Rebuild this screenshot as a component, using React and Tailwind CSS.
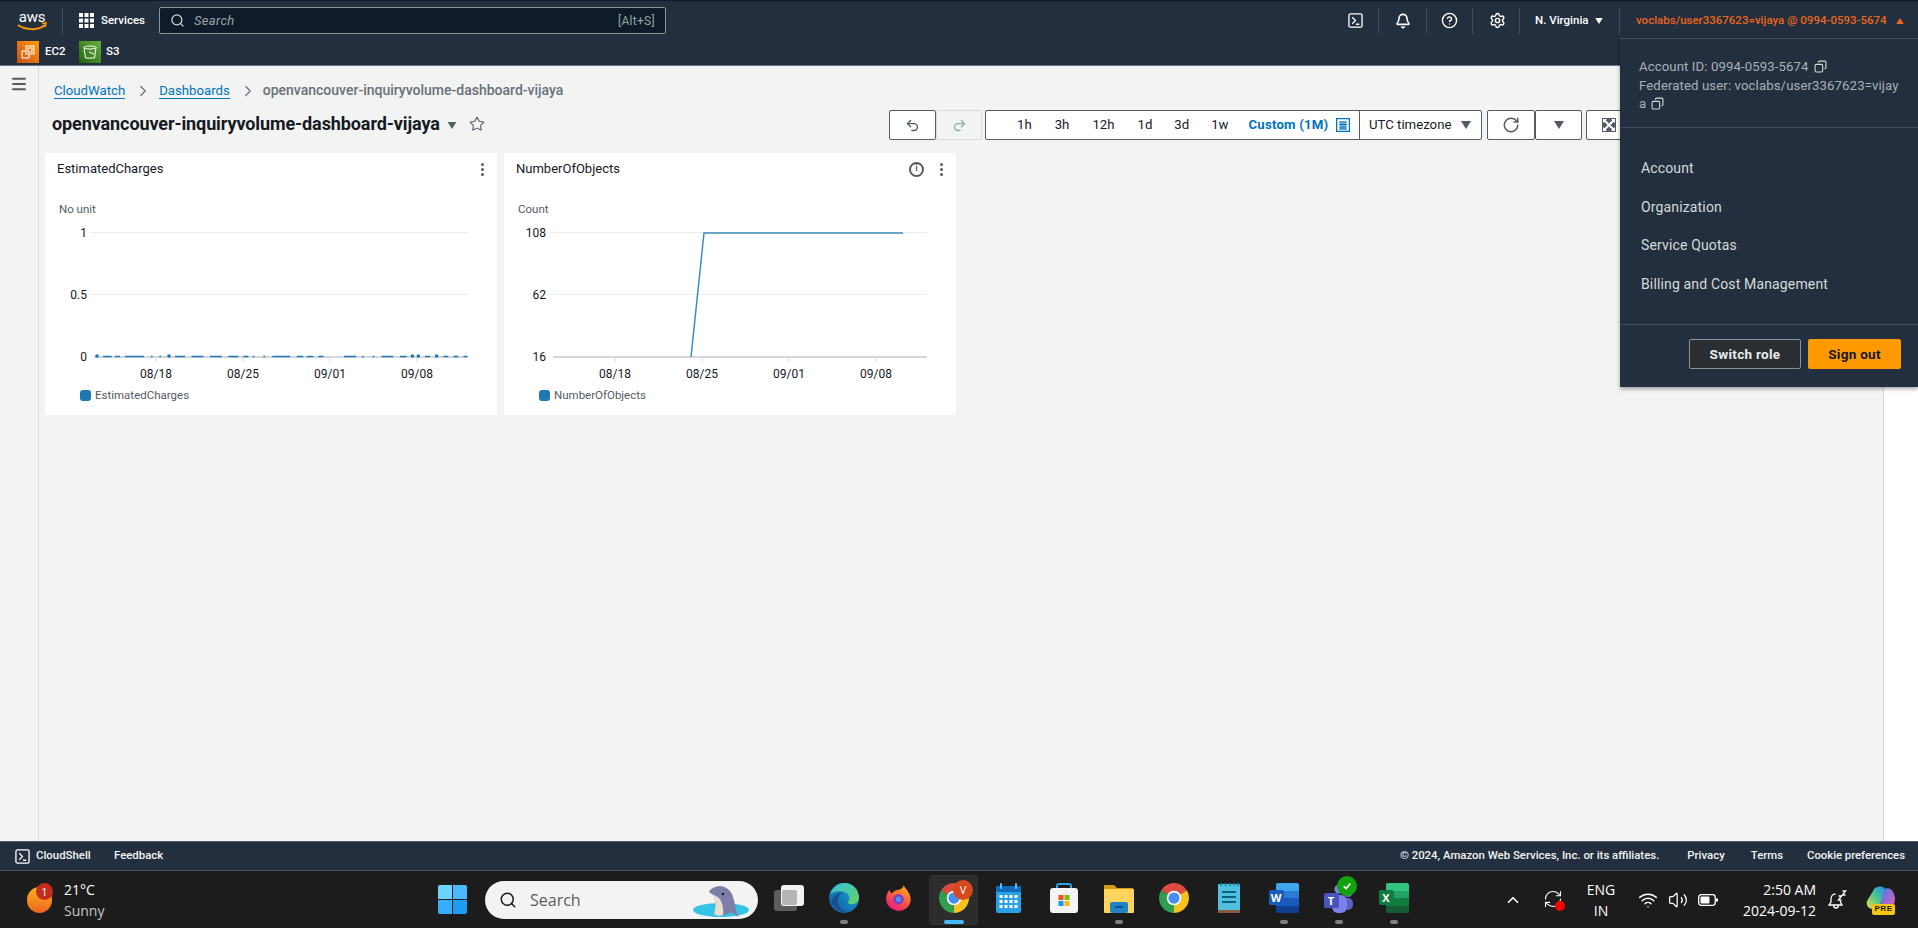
import { Bell, ChevronRight, ChevronUp, CircleHelp, Copy, Menu, Redo2, RefreshCw, RotateCw, Search, Settings, Star, Undo2, Volume2, Wifi } from 'lucide-react'

const Caret = ({ className = 'w-[9px] h-[7px]', fill = '#545b64' }) => (
  <svg viewBox="0 0 10 8" className={className}><path d="M0 0h10L5 8z" fill={fill} /></svg>
)

const Sep = () => <span className="block h-[26px] w-px bg-[#414d5c]" />

const ShellIcon = ({ className }) => (
  <svg viewBox="0 0 16 16" className={className} fill="none" stroke="#fff" strokeWidth="1.4">
    <rect x="1" y="1" width="14" height="14" rx="1.5" />
    <path d="M4.5 4.5 8 8l-3.5 3.5M8.5 12H12" />
  </svg>
)

const AwsLogo = () => (
  <div className="relative h-[24px] w-[30px]">
    <span className="block text-center text-[15px] leading-[16px] tracking-[-0.3px] text-white">aws</span>
    <svg viewBox="0 0 30 24" className="absolute inset-0 h-[24px] w-[30px]">
      <path d="M1 16c7 5 20 6 27 0" fill="none" stroke="#f90" strokeWidth="2" />
      <path d="M25 14.500l4-.5-1 4" fill="none" stroke="#f90" strokeWidth="1.500" />
    </svg>
  </div>
)

const GridIcon = () => (
  <svg viewBox="0 0 15 15" className="h-[15px] w-[15px]" fill="#fff">
    {[0, 5.5, 11].map((y) => [0, 5.5, 11].map((x) => <rect key={`${x}-${y}`} x={x} y={y} width="4" height="4" />))}
  </svg>
)

const Ec2Icon = () => (
  <span className="flex h-[22px] w-[22px] items-center justify-center bg-gradient-to-tr from-[#c8511b] to-[#ff9900]">
    <svg viewBox="0 0 16 16" className="h-[16px] w-[16px]" fill="none" stroke="#fff" strokeWidth="1">
      <rect x="6" y="2" width="8" height="8" />
      <rect x="8" y="4" width="4" height="4" />
      <path d="M6 7H2v7h7v-4" />
    </svg>
  </span>
)

const S3Icon = () => (
  <span className="flex h-[22px] w-[22px] items-center justify-center bg-gradient-to-tr from-[#1b660f] to-[#6cae3e]">
    <svg viewBox="0 0 16 16" className="h-[16px] w-[16px]" fill="none" stroke="#fff" strokeWidth="1">
      <ellipse cx="8" cy="3.500" rx="6" ry="1.500" />
      <path d="M2 3.500 3.500 14h9L14 3.500M7 8l5 2" />
    </svg>
  </span>
)

const NavBar = () => (
  <header className="h-[66px] shrink-0 border-t border-b border-t-[#0f1b2a] border-b-[#6b7480] bg-[#232f3e] text-white">
    <div className="flex h-[39px] items-center">
      <div className="ml-[17px] w-[30px]"><AwsLogo /></div>
      <span className="ml-[15px]"><Sep /></span>
      <div className="ml-[16px]"><GridIcon /></div>
      <span className="ml-[7px] w-[42px] whitespace-nowrap text-[11.500px] font-medium">Services</span>
      <div className="ml-[16px] flex h-[27px] w-[507px] items-center rounded-[2px] border border-[#879596] bg-[#0f1b2a] pl-[10px] pr-[10px] text-[13px]">
        <Search className="h-[15px] w-[15px] text-[#d5dbdb]" strokeWidth={2} />
        <span className="ml-[9px] italic tracking-[0.3px] text-[#95a5a6]">Search</span>
        <span className="ml-auto text-[12px] tracking-[0.3px] text-[#95a5a6]">[Alt+S]</span>
      </div>
      <div className="ml-[682px]"><ShellIcon className="h-[15px] w-[15px]" /></div>
      <span className="ml-[15px]"><Sep /></span>
      <Bell className="ml-[16px] h-[16px] w-[16px]" strokeWidth={2.4} />
      <span className="ml-[15px]"><Sep /></span>
      <CircleHelp className="ml-[14px] h-[17px] w-[17px]" strokeWidth={2} />
      <span className="ml-[14px]"><Sep /></span>
      <Settings className="ml-[16px] h-[17px] w-[17px]" strokeWidth={2} />
      <span className="ml-[13px]"><Sep /></span>
      <span className="ml-[15px] w-[54px] whitespace-nowrap text-[11.500px] font-medium">N. Virginia</span>
      <Caret className="ml-[6px] h-[6px] w-[8px]" fill="#fff" />
      <span className="ml-[16px]"><Sep /></span>
      <span className="ml-[16px] w-[254px] whitespace-nowrap text-[11.500px] font-medium text-[#e9661c]">voclabs/user3367623=vijaya @ 0994-0593-5674</span>
      <Caret className="ml-[6px] h-[6px] w-[8px] rotate-180" fill="#e9661c" />
    </div>
    <div className="flex h-[24px] items-center pl-[17px] text-[11.500px] font-medium">
      <Ec2Icon />
      <span className="ml-[6px] w-[18px]">EC2</span>
      <span className="ml-[16px]"><S3Icon /></span>
      <span className="ml-[5px]">S3</span>
    </div>
  </header>
)

const ToolBtn = ({ children, className = '' }) => (
  <button className={`flex h-[30px] items-center justify-center rounded-[2px] border border-[#545b64] bg-white ${className}`}>{children}</button>
)

const Toolbar = () => (
  <div className="ml-auto mr-[250px] flex items-center text-[13.200px] text-[#16191f]">
    <ToolBtn className="w-[47px]"><Undo2 className="h-[15px] w-[15px] text-[#545b64]" strokeWidth={2.2} /></ToolBtn>
    <button className="flex h-[30px] w-[46px] items-center justify-center rounded-[2px] border border-[#d5dbdb] bg-[#f2f3f3]"><Redo2 className="h-[15px] w-[15px] text-[#95a5a6]" strokeWidth={2.2} /></button>
    <div className="ml-[3px] flex h-[30px] w-[497px] items-center rounded-[2px] border border-[#545b64] bg-white">
      <div className="flex h-full w-[374px] items-center border-r border-[#545b64]">
        <span className="ml-[31px]">1h</span>
        <span className="ml-[23px]">3h</span>
        <span className="ml-[23px]">12h</span>
        <span className="ml-[23px]">1d</span>
        <span className="ml-[22px]">3d</span>
        <span className="ml-[22px]">1w</span>
        <span className="ml-[20px] font-bold tracking-[0.2px] text-[#0073bb]">Custom (1M)</span>
        <svg viewBox="0 0 14 14" className="ml-[8px] h-[14px] w-[14px]" fill="none" stroke="#0073bb"><rect x=".5" y=".5" width="13" height="13" strokeWidth="1.500" /><path d="M3 4h8M3 6.500h8M3 9h8M3 11h8M5 3.500v8M7 3.500v8M9 3.500v8" strokeWidth="1" /></svg>
      </div>
      <span className="ml-[9px]">UTC timezone</span>
      <Caret className="ml-[10px] h-[8px] w-[10px]" />
    </div>
    <ToolBtn className="ml-[5px] w-[48px]"><RotateCw className="h-[18px] w-[18px] text-[#545b64]" strokeWidth={2} /></ToolBtn>
    <ToolBtn className="w-[47px]"><Caret className="h-[8px] w-[10px]" /></ToolBtn>
    <ToolBtn className="ml-[4px] w-[47px] justify-start pl-[15px]">
      <svg viewBox="0 0 14 14" className="h-[14px] w-[14px]">
        <rect width="14" height="14" fill="#545b64" />
        <path d="M1 1h4L3.700 2.300 7 5.600l3.300-3.300L9 1h4v4l-1.300-1.300L8.400 7l3.300 3.300L13 9v4H9l1.300-1.300L7 8.400l-3.300 3.300L5 13H1V9l1.300 1.300L5.600 7 2.300 3.700 1 5z" fill="#fff" />
      </svg>
    </ToolBtn>
  </div>
)

const TICKS = [
  { x: 111, label: '08/18' },
  { x: 198, label: '08/25' },
  { x: 285, label: '09/01' },
  { x: 372, label: '09/08' },
]

const ESTIMATE_SEGMENTS = [[190, 215], [225, 240], [255, 312], [333, 338], [358, 363], [405, 435], [455, 490], [510, 545], [565, 595], [610, 625], [638, 643], [670, 675], [697, 750], [770, 790], [800, 820], [835, 850], [912, 948], [966, 971], [998, 1003], [1025, 1060], [1080, 1100], [1155, 1170], [1210, 1225], [1240, 1255], [1270, 1282]]
const ESTIMATE_DOTS = [171, 387, 1117, 1135, 1190]

const Chart = ({ unit, yLabels, children }) => (
  <svg viewBox="0 0 452 189" className="h-[189px] w-[452px]" fontFamily="Roboto, sans-serif" fontSize="12">
    <text x="14" y="13" fill="#545b64" fontSize="11.500">{unit}</text>
    <line x1="45" x2="423" y1="32.500" y2="32.500" stroke="#eaeded" />
    <line x1="45" x2="423" y1="94.500" y2="94.500" stroke="#eaeded" />
    <line x1="49" x2="423" y1="157" y2="157" stroke="#c6c9cc" strokeWidth="1.500" />
    {TICKS.map((t) => (
      <g key={t.label}>
        <line x1={t.x} x2={t.x} y1="157" y2="162" stroke="#d5dbdb" />
        <text x={t.x} y="178" textAnchor="middle" fill="#16191f">{t.label}</text>
      </g>
    ))}
    <text x="42" y="37" textAnchor="end" fill="#16191f">{yLabels[0]}</text>
    <text x="42" y="99" textAnchor="end" fill="#16191f">{yLabels[1]}</text>
    <text x="42" y="161" textAnchor="end" fill="#16191f">{yLabels[2]}</text>
    {children}
  </svg>
)

const Widget = ({ title, info, children }) => (
  <section className="h-[262px] w-[452px] bg-white">
    <div className="flex h-[47px] items-center pl-[12px] pr-[13px] pb-[15px] text-[13px] text-[#16191f]">
      <span>{title}</span>
      {info && <span className="ml-auto flex h-[15px] w-[15px] items-center justify-center rounded-full border-2 border-[#545b64] text-[9px] font-bold text-[#545b64]">i</span>}
      <span className={`${info ? 'ml-[16px]' : 'ml-auto'} flex flex-col gap-[2px]`}>
        <i className="h-[3px] w-[3px] rounded-full bg-[#545b64]" />
        <i className="h-[3px] w-[3px] rounded-full bg-[#545b64]" />
        <i className="h-[3px] w-[3px] rounded-full bg-[#545b64]" />
      </span>
    </div>
    {children}
    <div className="flex items-center pl-[35px] text-[11.500px] leading-[12px] text-[#545b64]">
      <span className="h-[11px] w-[11px] rounded-[3px] bg-[#1f77b4]" />
      <span className="ml-[4px]">{title}</span>
    </div>
  </section>
)

const Dashboard = () => (
  <main className="flex min-h-0 flex-1 bg-[#f2f3f3]">
    <aside className="w-[39px] shrink-0 border-r border-[#d5dbdb] pl-[10px] pt-[9px]">
      <Menu className="h-[18px] w-[18px] text-[#545b64]" strokeWidth={2.4} />
    </aside>
    <div className="min-w-0 flex-1">
      <nav className="flex h-[44px] items-center pl-[15px] pt-[5px] text-[13.200px]">
        <a className="border-b border-[#0073bb] leading-[15px] text-[#0073bb]">CloudWatch</a>
        <ChevronRight className="ml-[9px] h-[18px] w-[18px] text-[#687078]" strokeWidth={1.600} />
        <a className="ml-[7px] border-b border-[#0073bb] leading-[15px] text-[#0073bb]">Dashboards</a>
        <ChevronRight className="ml-[9px] h-[18px] w-[18px] text-[#687078]" strokeWidth={1.600} />
        <span className="ml-[6px] text-[14px] font-medium text-[#687078]">openvancouver-inquiryvolume-dashboard-vijaya</span>
      </nav>
      <div className="flex h-[30px] items-center pl-[13px]">
        <h1 className="mb-[3px] text-[18px] font-bold tracking-[-0.1px] text-[#16191f]">openvancouver-inquiryvolume-dashboard-vijaya</h1>
        <Caret className="ml-[7px] h-[7px] w-[10px]" />
        <Star className="mb-[3px] ml-[12px] h-[16px] w-[16px] text-[#545b64]" strokeWidth={1.600} />
        <Toolbar />
      </div>
      <div className="flex gap-[7px] pl-[6px] pt-[13px]">
        <Widget title="EstimatedCharges">
          <Chart unit="No unit" yLabels={['1', '0.5', '0']}>
            {ESTIMATE_SEGMENTS.map(([a, b]) => (
              <line key={a} x1={a / 3 - 5} x2={b / 3 - 5} y1="156.500" y2="156.500" stroke="#1f77b4" strokeWidth="1.500" />
            ))}
            {ESTIMATE_DOTS.map((d) => <circle key={d} cx={d / 3 - 5} cy="156" r="1.800" fill="#1f77b4" />)}
          </Chart>
        </Widget>
        <Widget title="NumberOfObjects" info>
          <Chart unit="Count" yLabels={['108', '62', '16']}>
            <polyline points="187,157 200,33 399,33" fill="none" stroke="#1f77b4" strokeWidth="1.500" opacity="0.85" />
          </Chart>
        </Widget>
      </div>
    </div>
    <div className="w-[35px] shrink-0 border-l border-[#d5dbdb] bg-white" />
  </main>
)

const AccountMenu = () => (
  <div className="absolute left-[1620px] top-[38px] flex h-[349px] w-[298px] flex-col border-t border-[#414d5c] bg-[#232f3e] shadow-[0_2px_4px_rgba(0,0,0,0.35)]">
    <div className="h-[89px] border-b border-[#414d5c] pl-[19px] pr-[18px] pt-[18px] text-[13.200px] leading-[19px] tracking-[0.1px] text-[#a8b0b8]">
      <div className="flex items-center">Account ID: 0994-0593-5674<Copy className="ml-[5px] h-[13px] w-[13px] -scale-x-100 text-[#d5dbdb]" strokeWidth={2} /></div>
      <div className="whitespace-nowrap">Federated user: voclabs/user3367623=vijay</div>
      <div className="-mt-[1px] flex items-center">a<Copy className="ml-[5px] h-[13px] w-[13px] -scale-x-100 text-[#d5dbdb]" strokeWidth={2} /></div>
    </div>
    <ul className="flex h-[197px] flex-col gap-[19px] border-b border-[#414d5c] pl-[21px] pt-[31px] text-[14px] leading-[19.500px] tracking-[0.15px] text-[#d5dbdb]">
      <li>Account</li>
      <li>Organization</li>
      <li>Service Quotas</li>
      <li>Billing and Cost Management</li>
    </ul>
    <div className="flex justify-end gap-[7px] pr-[17px] pt-[14px] text-[13.500px] font-bold tracking-[0.3px]">
      <button className="h-[30px] w-[112px] rounded-[2px] border border-[#879596] bg-[#2a2e33] text-[#e9ebed]">Switch role</button>
      <button className="h-[30px] w-[93px] rounded-[2px] bg-[#ff9900] text-[#16191f]">Sign out</button>
    </div>
  </div>
)

const FooterBar = () => (
  <footer className="flex h-[30px] shrink-0 items-center border-t border-b border-t-[#545b64] border-b-[#414d5c] bg-[#232f3e] pl-[15px] pr-[13px] text-[11.400px] font-medium text-[#f2f3f3]">
    <ShellIcon className="h-[15px] w-[15px]" />
    <span className="ml-[6px] w-[55px]">CloudShell</span>
    <span className="ml-[23px]">Feedback</span>
    <span className="ml-auto">© 2024, Amazon Web Services, Inc. or its affiliates.</span>
    <span className="ml-[28px]">Privacy</span>
    <span className="ml-[26px]">Terms</span>
    <span className="ml-[24px] tracking-[-0.05px]">Cookie preferences</span>
  </footer>
)

const ChromeIcon = ({ className = 'h-[30px] w-[30px]' }) => (
  <svg viewBox="0 0 24 24" className={className}>
    <path d="M12 12 1.610 6A12 12 0 0 1 22.390 6z" fill="#dd4b3e" />
    <path d="M12 12 22.390 6A12 12 0 0 1 12 24z" fill="#f7c21b" />
    <path d="M12 12 12 24A12 12 0 0 1 1.610 6z" fill="#2f9e4f" />
    <circle cx="12" cy="12" r="5.800" fill="#fff" />
    <circle cx="12" cy="12" r="4.500" fill="#4a8df0" />
  </svg>
)

const TaskView = () => (
  <span className="relative h-[30px] w-[30px]">
    <span className="absolute bottom-[2px] left-0 h-[21px] w-[23px] rounded-[3px] bg-[#5d5d5d]" />
    <span className="absolute right-0 top-[2px] h-[21px] w-[23px] rounded-[3px] bg-[#f2f2f2]" />
    <span className="absolute bottom-[8px] left-[8px] h-[15px] w-[15px] rounded-[2px] bg-[#b5b5b5]" />
  </span>
)

const EdgeIcon = () => (
  <svg viewBox="0 0 24 24" className="h-[30px] w-[30px]">
    <defs>
      <linearGradient id="edge1" x1="0" y1="1" x2="1" y2="0"><stop offset="0" stopColor="#0c59a4" /><stop offset="1" stopColor="#1fa5d8" /></linearGradient>
      <linearGradient id="edge2" x1="0" y1="0" x2="1" y2="1"><stop offset="0" stopColor="#33bfe0" /><stop offset="1" stopColor="#61d45f" /></linearGradient>
    </defs>
    <circle cx="12" cy="12" r="12" fill="url(#edge1)" />
    <path d="M1 9C3 3 8 0 12 0c7 0 12 5 12 12 0 3-3 5-6 5-2 0-3-1-3-2 2-1 2-5-1-7-4-2-10-2-13 1z" fill="url(#edge2)" />
    <path d="M14 8c-3-1-7 1-7 6 0 4 3 8 7 9-4 1-10-2-12-8 1-4 6-9 12-7z" fill="#1b4f8c" />
  </svg>
)

const FirefoxIcon = () => (
  <svg viewBox="0 0 24 24" className="h-[30px] w-[28px]">
    <defs><linearGradient id="ff" x1="0.800" y1="0" x2="0.200" y2="1"><stop offset="0" stopColor="#ffb01f" /><stop offset="0.500" stopColor="#ff5a3c" /><stop offset="1" stopColor="#e31587" /></linearGradient></defs>
    <path d="M16 1c1 3 6 6 6 12 0 6-5 10-10 10S1 19 1 13c0-3 1-6 3-8 0 2 1 3 2 3 1-2 4-3 6-3 2-1 4-2 4-4z" fill="url(#ff)" />
    <circle cx="11.500" cy="13" r="4.500" fill="#7b3fc4" />
    <circle cx="11.500" cy="13" r="2.300" fill="#4f8ff0" />
  </svg>
)

const CalendarIcon = () => (
  <svg viewBox="0 0 25 30" className="h-[30px] w-[25px]">
    <rect y="3" width="25" height="27" rx="2" fill="#2aa0e6" />
    <path d="M0 5a2 2 0 0 1 2-2h21a2 2 0 0 1 2 2v4H0z" fill="#0f6cbd" />
    <rect x="4" width="2" height="6" rx="1" fill="#4fc3f7" />
    <rect x="19" width="2" height="6" rx="1" fill="#4fc3f7" />
    {[12, 17, 22].map((y) => [3.500, 8.500, 13.500, 18.500].map((x) => <rect key={`${x}-${y}`} x={x} y={y} width="3" height="3" fill="#fff" />))}
  </svg>
)

const StoreIcon = () => (
  <svg viewBox="0 0 28 30" className="h-[30px] w-[28px]">
    <path d="M7 6V3a2 2 0 0 1 2-2h10a2 2 0 0 1 2 2v3" fill="none" stroke="#2aa0e6" strokeWidth="2" />
    <rect y="5" width="28" height="25" rx="3" fill="#f4f4f4" />
    <rect x="8.500" y="12" width="5" height="5" fill="#f25022" />
    <rect x="14.500" y="12" width="5" height="5" fill="#7fba00" />
    <rect x="8.500" y="18" width="5" height="5" fill="#00a4ef" />
    <rect x="14.500" y="18" width="5" height="5" fill="#ffb900" />
  </svg>
)

const FolderIcon = () => (
  <svg viewBox="0 0 30 30" className="h-[30px] w-[30px]">
    <path d="M0 3a1 1 0 0 1 1-1h9l3 3h16v4H0z" fill="#d49a10" />
    <rect y="6" width="30" height="24" rx="1" fill="#ffd45c" />
    <rect x="6" y="19" width="18" height="11" rx="2" fill="#1f83c9" />
    <rect x="11" y="23" width="8" height="2" fill="#0f4f85" />
  </svg>
)

const NotepadIcon = () => (
  <svg viewBox="0 0 22 30" className="h-[30px] w-[22px]">
    <rect y="1" width="22" height="28" rx="1" fill="#4fc0de" />
    <rect y="27" width="22" height="3" fill="#8a5a3c" />
    <path d="M4 9h14M4 14h14M4 19h14" stroke="#0f5f7f" strokeWidth="2" />
    <path d="M3 0v3M7.500 0v3M12 0v3M16.500 0v3M20 0v3" stroke="#0f7fa8" strokeWidth="1.500" />
  </svg>
)

const OfficeIcon = ({ letter, bands, tile }) => (
  <span className="relative flex h-[30px] w-[30px] justify-end">
    <span className="flex h-full w-[23px] flex-col overflow-hidden rounded-[2px]">
      {bands.map((b) => <span key={b} className="flex-1" style={{ background: b }} />)}
    </span>
    <span className="absolute left-0 top-[7px] flex h-[15px] w-[15px] items-center justify-center rounded-[2px] text-[11px] font-bold leading-none text-white" style={{ background: tile }}>{letter}</span>
  </span>
)

const TeamsIcon = () => (
  <span className="relative flex h-[30px] w-[30px]">
    <svg viewBox="0 0 30 30" className="h-[30px] w-[30px]">
      <circle cx="24" cy="10" r="4" fill="#6e74d6" />
      <rect x="18" y="15" width="11" height="12" rx="5" fill="#5a60c0" />
      <circle cx="15" cy="6" r="4.500" fill="#7b83eb" />
      <rect x="8" y="12" width="15" height="18" rx="6" fill="#7b83eb" />
      <rect y="10" width="15" height="15" rx="1.500" fill="#4b53bc" />
    </svg>
    <span className="absolute left-0 top-[10px] flex h-[15px] w-[15px] items-center justify-center text-[11px] font-bold leading-none text-white">T</span>
    <span className="absolute -right-[3px] -top-[7px] flex h-[20px] w-[20px] items-center justify-center rounded-full bg-[#13a10e] text-white">
      <svg viewBox="0 0 12 12" className="h-[10px] w-[10px]" fill="none" stroke="#fff" strokeWidth="2"><path d="M2 6.500 5 9l5-6" /></svg>
    </span>
  </span>
)

const Dolphin = () => (
  <svg viewBox="0 0 58 38" className="absolute bottom-0 right-[8px] h-[38px] w-[58px]">
    <ellipse cx="29" cy="29" rx="28" ry="7" fill="#35c4e6" />
    <path d="M22 33c2-7 2-13 0-18l-5-4c1-3 5-5 10-6 7 0 12 4 14 11 3 8 2 14 6 20l-4-2-4-3c-3 3-9 4-14 3z" fill="#7d7fa8" />
    <path d="M18 12l6 3c6 3 8 11 7 19-3 1-6 1-9-1 2-7 2-13 0-18z" fill="#e6dfd2" />
    <circle cx="31" cy="13" r="1.300" fill="#1c1c2c" />
  </svg>
)

const CopilotIcon = () => (
  <span className="relative block h-[30px] w-[30px]">
    <svg viewBox="0 0 30 26" className="h-[26px] w-[30px]">
      <defs>
        <linearGradient id="cp1" x1="0" y1="1" x2="1" y2="0"><stop offset="0" stopColor="#f7d648" /><stop offset="0.500" stopColor="#4ec98a" /><stop offset="1" stopColor="#1f8ff0" /></linearGradient>
        <linearGradient id="cp2" x1="0" y1="0" x2="1" y2="1"><stop offset="0" stopColor="#3f7be8" /><stop offset="1" stopColor="#e85bc0" /></linearGradient>
      </defs>
      <path d="M7 6c2-5 8-5 10-4 3 1 1 6 0 10-2 6-4 12-10 12-5 0-7-4-6-8z" fill="url(#cp1)" />
      <path d="M18 4c5-2 9 1 10 5 2 5 1 11-3 13-3 1-9 2-12 0 3-4 4-12 5-18z" fill="url(#cp2)" />
    </svg>
    <span className="absolute bottom-0 left-[6px] flex h-[11px] w-[23px] items-center justify-center rounded-[2px] bg-[#f5c518] font-['Liberation_Sans',sans-serif] text-[8px] font-bold leading-none tracking-[0.5px] text-[#1c1c1c]">PRE</span>
  </span>
)

const SnoozeBell = () => (
  <svg viewBox="0 0 20 20" className="h-[20px] w-[20px]" fill="none" stroke="#fff" strokeWidth="1.300">
    <path d="M8.500 4C5.500 4 4 6.500 4 9v3l-2 3h13l-1.500-3v-1M6.500 15c0 2 1 3 2.500 3s2.500-1 2.500-3" />
    <path d="M11.500 6h3l-3 4h3M15.500 1h3l-3 4h3" strokeWidth="1.400" />
  </svg>
)

const TaskSlot = ({ pill, children }) => (
  <div className="relative flex h-[50px] w-[55px] items-center justify-center pb-[3px]">
    {children}
    {pill && <span className="absolute bottom-[1px] left-1/2 h-[4px] w-[8px] -translate-x-1/2 rounded-full bg-[#7f7f7f]" />}
  </div>
)

const Taskbar = () => (
  <div className="flex h-[57px] shrink-0 items-center bg-[#1c1c1c] font-['Open_Sans',sans-serif] text-white">
    <div className="relative ml-[27px] h-[26px] w-[25px] rounded-full bg-gradient-to-b from-[#f5b21d] to-[#f0611c]">
      <span className="absolute -right-[1px] -top-[4px] flex h-[17px] w-[17px] items-center justify-center rounded-full bg-[#c42b1c] text-[11px] leading-none">1</span>
    </div>
    <div className="ml-[12px] w-[60px] text-[14px] leading-[21px]">
      <div>21°C</div>
      <div className="text-[#c8c8c8]">Sunny</div>
    </div>
    <div className="ml-[314px] grid h-[29px] w-[29px] grid-cols-2 gap-[1px]">
      <span className="rounded-tl-[2px] bg-[#6fd3ff]" />
      <span className="rounded-tr-[2px] bg-[#4ab8fb]" />
      <span className="rounded-bl-[2px] bg-[#36aefc]" />
      <span className="rounded-br-[2px] bg-[#1f9cf5]" />
    </div>
    <div className="relative ml-[18px] flex h-[38px] w-[273px] items-center rounded-full bg-[#f3f3f3] pl-[14px] text-[16px] text-[#5d5d5d]">
      <Search className="h-[18px] w-[18px] text-[#1c1c1c]" strokeWidth={2} />
      <span className="ml-[13px]">Search</span>
      <Dolphin />
    </div>
    <div className="ml-[3px] flex">
      <TaskSlot><TaskView /></TaskSlot>
      <TaskSlot pill><EdgeIcon /></TaskSlot>
      <TaskSlot><FirefoxIcon /></TaskSlot>
      <div className="relative flex h-[50px] w-[55px] items-center justify-center pb-[3px]">
        <div className="absolute inset-y-0 left-[3px] right-[3px] rounded-[4px] border border-[#333] bg-[#2c2c2c]" />
        <span className="relative"><ChromeIcon /></span>
        <span className="absolute left-[27px] top-[5px] flex h-[20px] w-[20px] items-center justify-center rounded-full bg-[#d8481c] text-[11px] leading-none">V</span>
        <span className="absolute bottom-[1px] left-1/2 h-[4px] w-[20px] -translate-x-1/2 rounded-full bg-[#47b8f5]" />
      </div>
      <TaskSlot><CalendarIcon /></TaskSlot>
      <TaskSlot><StoreIcon /></TaskSlot>
      <TaskSlot pill><FolderIcon /></TaskSlot>
      <TaskSlot><ChromeIcon /></TaskSlot>
      <TaskSlot><NotepadIcon /></TaskSlot>
      <TaskSlot pill><OfficeIcon letter="W" tile="#185abd" bands={['#41a5ee', '#2b7cd3', '#185abd', '#103f91']} /></TaskSlot>
      <TaskSlot pill><TeamsIcon /></TaskSlot>
      <TaskSlot pill><OfficeIcon letter="X" tile="#107c41" bands={['#33c481', '#21a366', '#107c41', '#185c37']} /></TaskSlot>
    </div>
    <ChevronUp className="ml-[83px] h-[18px] w-[18px]" strokeWidth={2.200} />
    <div className="relative ml-[21px] h-[22px] w-[22px]">
      <RefreshCw className="h-[20px] w-[20px]" strokeWidth={1.300} />
      <span className="absolute bottom-0 right-0 h-[10px] w-[10px] rounded-full bg-[#f00]" />
    </div>
    <div className="ml-[19px] w-[34px] text-center text-[14px] leading-[21px]">ENG<br />IN</div>
    <Wifi className="ml-[20px] h-[20px] w-[20px]" strokeWidth={1.800} />
    <Volume2 className="ml-[10px] h-[20px] w-[20px]" strokeWidth={1.500} />
    <svg viewBox="0 0 20 12" className="ml-[10px] h-[12px] w-[20px]" fill="none" stroke="#fff" strokeWidth="1.300">
      <rect x=".7" y=".7" width="16.500" height="10.600" rx="2.500" />
      <rect x="2.500" y="2.500" width="9" height="7" rx="1" fill="#fff" stroke="none" />
      <path d="M19 4.500v3" strokeWidth="2" />
    </svg>
    <div className="ml-[14px] w-[84px] text-right text-[14px] leading-[21px]">
      <div>2:50 AM</div>
      <div>2024-09-12</div>
    </div>
    <span className="ml-[11px]"><SnoozeBell /></span>
    <span className="ml-[19px]"><CopilotIcon /></span>
  </div>
)

export default function App() {
  return (
    <div className="relative flex h-[928px] w-[1918px] flex-col overflow-hidden font-['Roboto',sans-serif]">
      <NavBar />
      <Dashboard />
      <FooterBar />
      <Taskbar />
      <AccountMenu />
    </div>
  )
}
